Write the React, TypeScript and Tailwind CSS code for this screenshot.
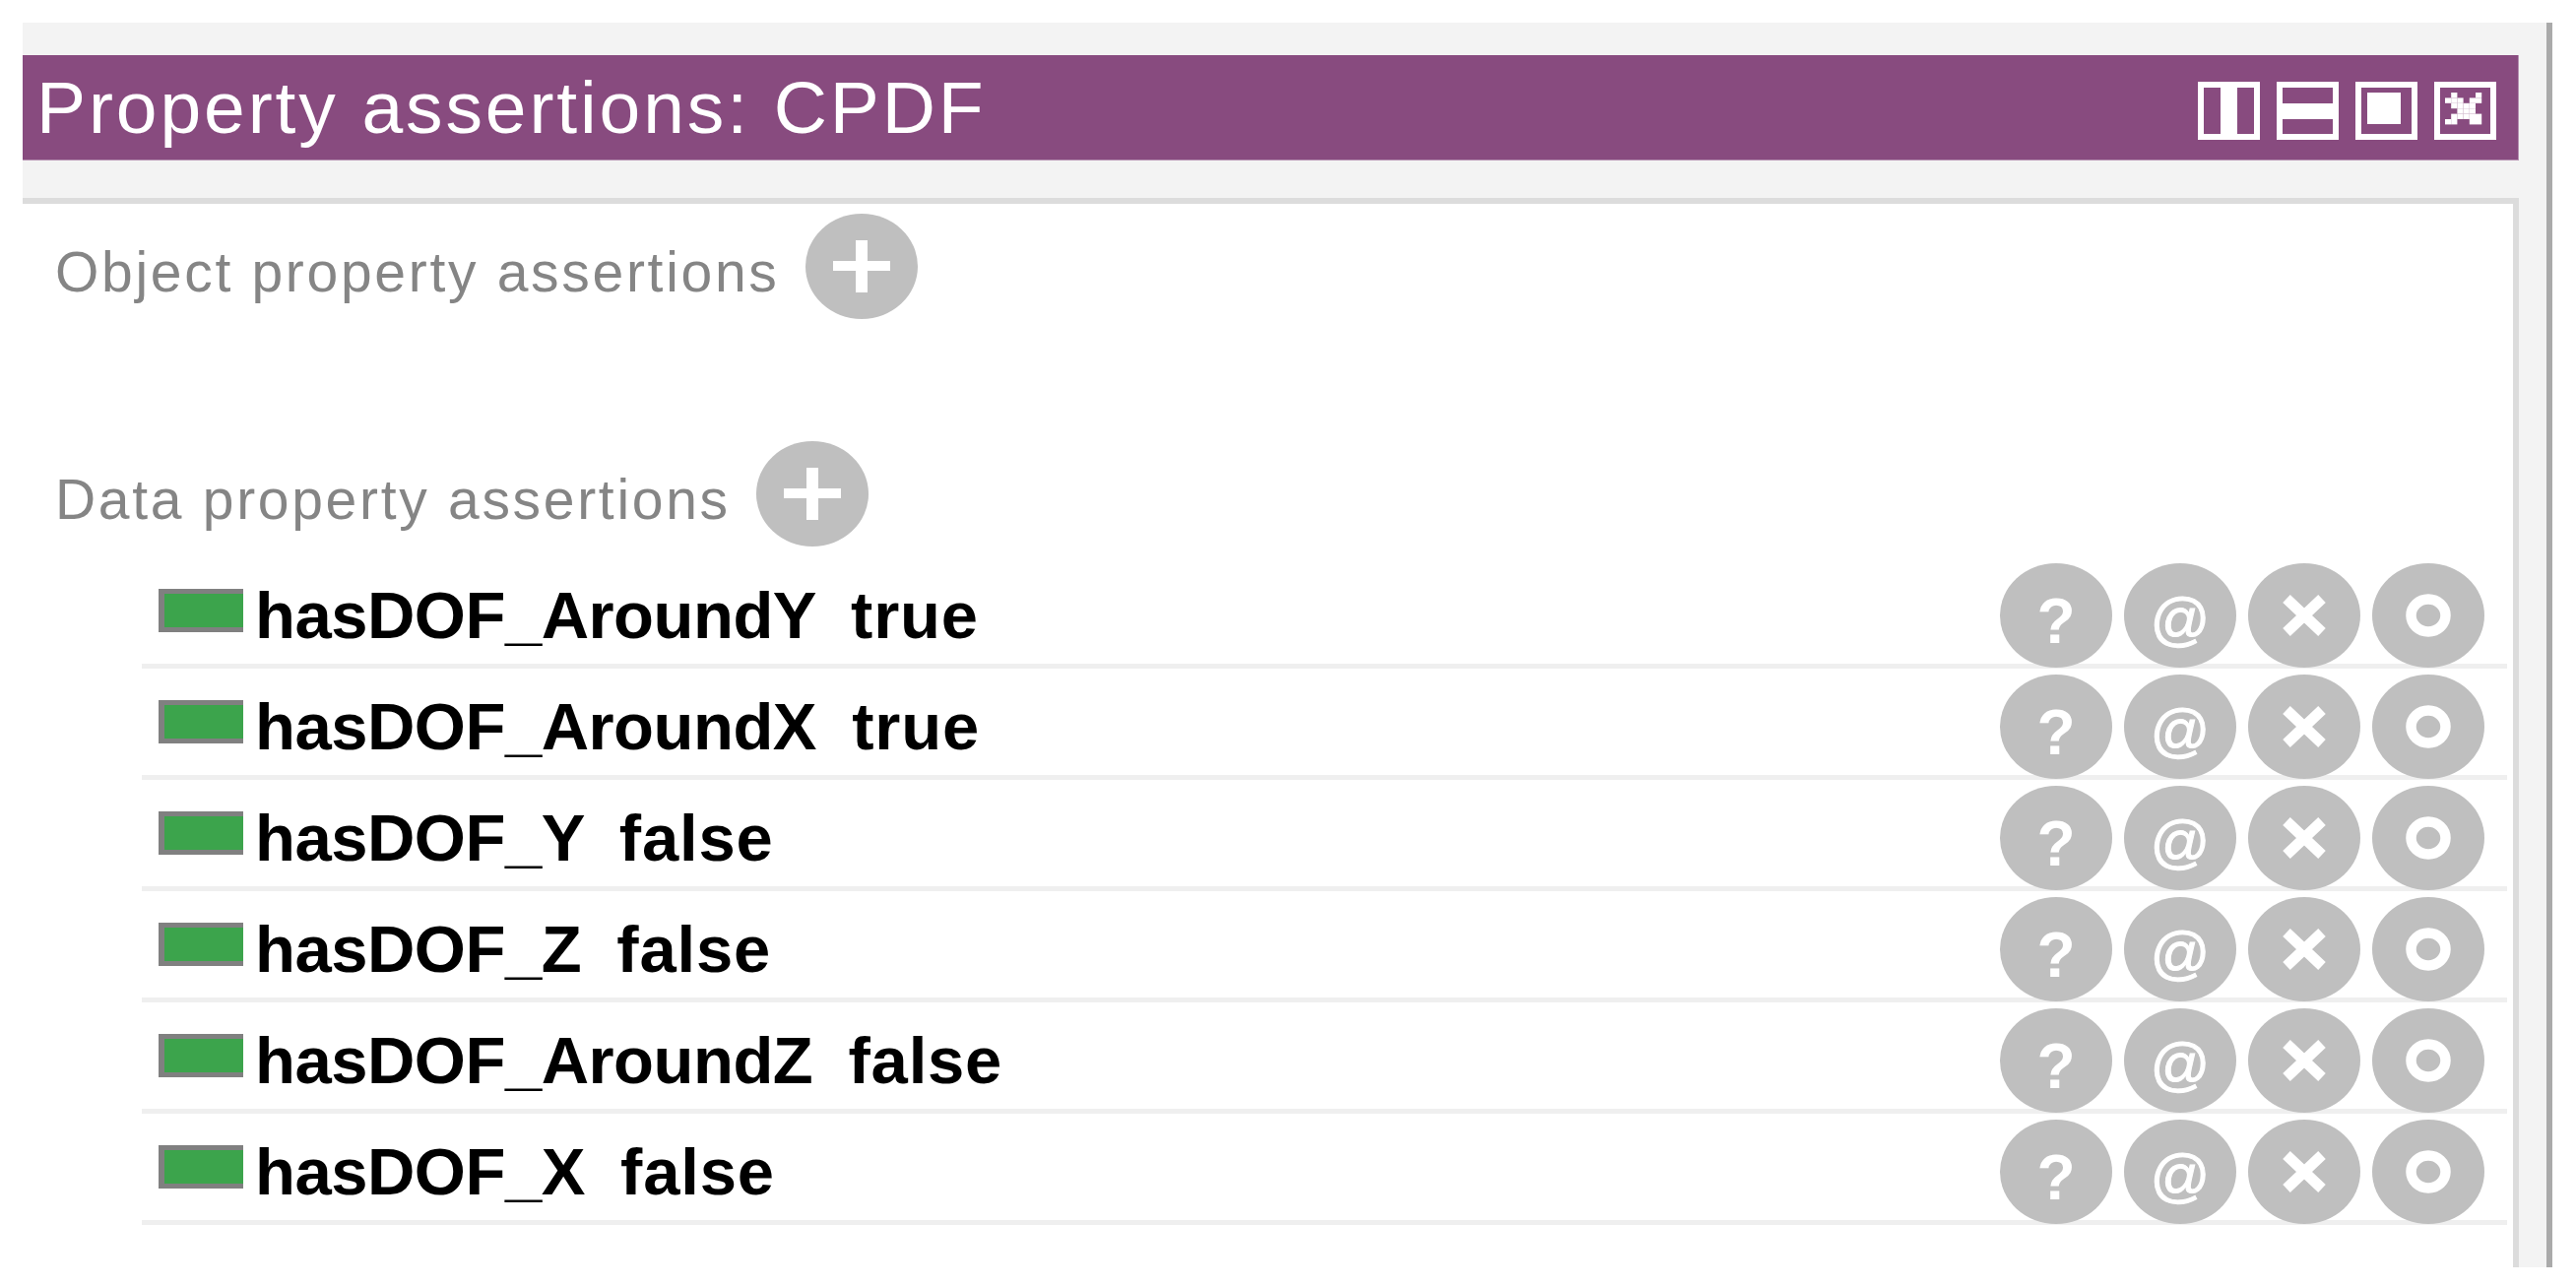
const rows = [
  { name: 'hasDOF_AroundY', value: 'true' },
  { name: 'hasDOF_AroundX', value: 'true' },
  { name: 'hasDOF_Y', value: 'false' },
  { name: 'hasDOF_Z', value: 'false' },
  { name: 'hasDOF_AroundZ', value: 'false' },
  { name: 'hasDOF_X', value: 'false' },
];

// blocky close glyph, one entry per row of low-res pixels
const closeGlyph = [
  [1, 5],
  [0, 1, 2, 4, 5],
  [1, 2, 3, 4],
  [2, 3, 4],
  [1, 2, 3, 4, 5],
  [0, 1, 4, 5],
];

function ViewButton({ kind }: { kind: 'cols' | 'rows' | 'max' | 'close' }) {
  return (
    <svg width="63" height="59" viewBox="0 0 63 59" className="shrink-0">
      <rect x="3" y="3" width="57" height="53" fill="none" stroke="#fff" strokeWidth="6" />
      {kind === 'cols' && <rect x="23" y="0" width="17" height="59" fill="#fff" />}
      {kind === 'rows' && <rect x="0" y="22" width="63" height="16" fill="#fff" />}
      {kind === 'max' && <rect x="12" y="11" width="34" height="32" fill="#fff" />}
      {kind === 'close' &&
        closeGlyph.map((cols, y) =>
          cols.map((x) => (
            <rect key={`${x}-${y}`} x={11 + x * 6.2} y={11 + y * 5.4} width="6.2" height="5.4" fill="#fff" />
          )),
        )}
    </svg>
  );
}

function PlusButton() {
  return (
    <button className="flex h-[107px] w-[114px] shrink-0 items-center justify-center rounded-[50%] bg-[#bfbfbf]">
      <svg width="58" height="53" viewBox="0 0 58 53">
        <path d="M23 0h12v21h23v10H35v22H23V31H0V21h23z" fill="#fff" />
      </svg>
    </button>
  );
}

function RoundButton({ children }: { children: React.ReactNode }) {
  return (
    <button className="flex h-[106px] w-[114px] items-center justify-center rounded-[50%] bg-[#bfbfbf] text-white">
      {children}
    </button>
  );
}

function SectionHeader({ label }: { label: string }) {
  return (
    <div className="flex items-center gap-[26px] pl-[33px]">
      <span className="mt-[12px] text-[57px] leading-none tracking-[2.7px] text-[#858585]">{label}</span>
      <PlusButton />
    </div>
  );
}

export default function App() {
  return (
    <div className="min-h-[1307px] bg-white pt-[23px] pl-[23px] font-['Liberation_Sans',Arial,sans-serif]">
      <div className="flex h-[1264px] w-[2569px] flex-col border-r-[6px] border-[#aaaaaa] bg-[#f3f3f3] pt-[33px] pr-[28px]">
        {/* Title bar */}
        <header className="flex h-[107px] items-center justify-between border-r border-b border-[#b692b2] bg-[#884b7f] pr-[22px] pl-[14px]">
          <h1 className="text-[75px] leading-none font-normal tracking-[2.9px] text-white">
            Property assertions: CPDF
          </h1>
          <div className="mt-[6px] flex gap-[17px]">
            <ViewButton kind="cols" />
            <ViewButton kind="rows" />
            <ViewButton kind="max" />
            <ViewButton kind="close" />
          </div>
        </header>

        {/* Body */}
        <div className="mt-[38px] flex flex-1 flex-col border-t-[6px] border-r-[6px] border-[#dcdcdc] bg-white pt-[10px]">
          <SectionHeader label="Object property assertions" />
          <div className="mt-[124px]">
            <SectionHeader label="Data property assertions" />
          </div>
          <div className="mt-[11px] mr-[6px] ml-[121px]">
            {rows.map((row) => (
              <div
                key={row.name}
                className="flex h-[113px] items-start justify-between border-b-[5px] border-[#efefef] pr-[23px] pl-[17px]"
              >
                <div className="flex items-start pt-[32px]">
                  <span className="h-[44px] w-[86px] border-y-[5px] border-l-[6px] border-[#808080] bg-[#3ca44c]" />
                  <span className="mt-[-12px] ml-[12px] text-[67px] leading-[77px] font-bold tracking-[-0.5px] whitespace-pre text-black">
                    {row.name}  <span className="tracking-[0.8px]">{row.value}</span>
                  </span>
                </div>
                <div className="mt-[6px] flex gap-[12px]">
                  <RoundButton>
                    <span className="mt-[12px] text-[64px] leading-none font-bold">?</span>
                  </RoundButton>
                  <RoundButton>
                    <span className="mt-[8px] text-[60px] leading-none [-webkit-text-stroke:1px_white]">@</span>
                  </RoundButton>
                  <RoundButton>
                    <svg width="46" height="44" viewBox="0 0 46 44">
                      <path d="M5 5l36 34M41 5L5 39" stroke="#fff" strokeWidth="11" />
                    </svg>
                  </RoundButton>
                  <RoundButton>
                    <svg width="46" height="44" viewBox="0 0 46 44">
                      <ellipse cx="23" cy="22" rx="17.5" ry="16.5" fill="none" stroke="#fff" strokeWidth="10.5" />
                    </svg>
                  </RoundButton>
                </div>
              </div>
            ))}
          </div>
        </div>
      </div>
    </div>
  );
}
